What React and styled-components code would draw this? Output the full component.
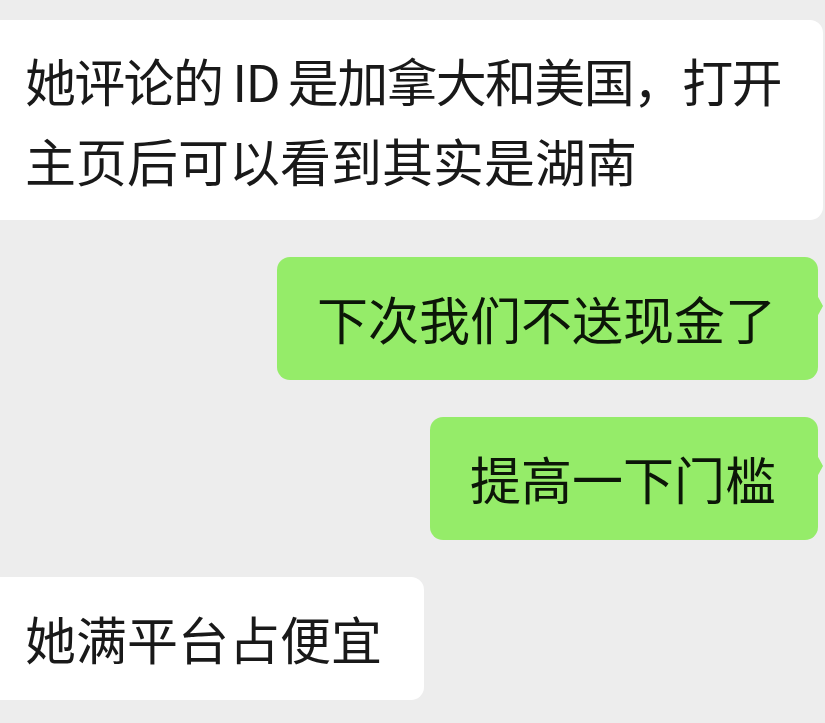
import styled, { createGlobalStyle } from "styled-components";

const GlobalStyle = createGlobalStyle`
  html, body {
    margin: 0;
    padding: 0;
    background: #ededed;
  }
  body {
    font-family: "Noto Sans CJK SC", "Noto Sans", sans-serif;
    overflow: hidden;
  }
`;

const Chat = styled.div`
  display: flex;
  flex-direction: column;
  gap: 37px;
  padding: 20px 0 0;
  height: 723px;
  box-sizing: border-box;
  overflow: hidden;
`;

const Row = styled.div`
  display: flex;
  justify-content: ${(p) => (p.$mine ? "flex-end" : "flex-start")};
  padding-right: ${(p) => (p.$mine ? "7px" : "3px")};
`;

const Bubble = styled.div`
  position: relative;
  box-sizing: border-box;
  flex: ${(p) => (p.$multi ? "0 0 839px" : "0 0 auto")};
  background: ${(p) => (p.$mine ? "#95ec69" : "#ffffff")};
  color: ${(p) => (p.$mine ? "#0c1608" : "#191919")};
  font-size: 51px;
  padding: ${(p) =>
    p.$multi ? "20px 42px" : p.$mine ? "21px 42px 22px 40px" : "21px 42px 22px 42px"};
  border-radius: 13px;
  margin-left: ${(p) => (p.$mine ? "0" : "-17px")};
  white-space: nowrap;

  &::after {
    content: "";
    display: ${(p) => (p.$mine ? "block" : "none")};
    position: absolute;
    right: -5px;
    top: 38px;
    border-top: 11px solid transparent;
    border-bottom: 11px solid transparent;
    border-left: 6px solid #95ec69;
  }
`;

const Line = styled.div`
  line-height: 80px;
  letter-spacing: ${(p) => (p.$tight ? "-1.7px" : "0")};
`;

const Latin = styled.span`
  margin: 0 9px 0 10px;
`;

function App() {
  return (
    <>
      <GlobalStyle />
      <Chat>
        <Row>
          <Bubble $multi>
            <Line $tight>
              她评论的<Latin>ID</Latin>是加拿大和美国，打开
            </Line>
            <Line>主页后可以看到其实是湖南</Line>
          </Bubble>
        </Row>
        <Row $mine>
          <Bubble $mine>
            <Line>下次我们不送现金了</Line>
          </Bubble>
        </Row>
        <Row $mine>
          <Bubble $mine>
            <Line>提高一下门槛</Line>
          </Bubble>
        </Row>
        <Row>
          <Bubble>
            <Line>她满平台占便宜</Line>
          </Bubble>
        </Row>
      </Chat>
    </>
  );
}

export default App;
